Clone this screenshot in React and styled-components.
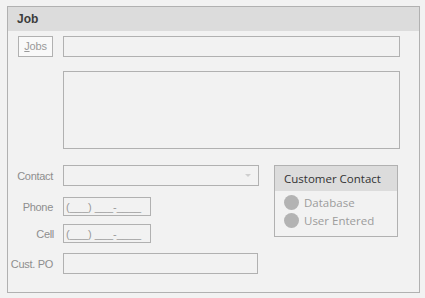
import styled, { createGlobalStyle } from "styled-components";

const GlobalStyle = createGlobalStyle`
  html, body {
    margin: 0;
    background: #f2f2f2;
  }
  body {
    font-family: "Liberation Sans", Arial, sans-serif;
  }
`;

const Frame = styled.section`
  box-sizing: border-box;
  width: 413px;
  height: 287px;
  margin: 6px 0 0 7px;
  border: 1px solid #b1b1b1;
  background: #f2f2f2;
`;

const Header = styled.div`
  height: 24px;
  background: #dcdcdc;
  display: flex;
  align-items: center;
  padding-left: 9px;
  font-size: 12px;
  font-weight: bold;
  color: #3c3c3c;
`;

const Body = styled.div`
  padding: 0 19px 0 4px;
`;

const Row = styled.div`
  display: grid;
  grid-template-columns: 42px ${(p) => p.$width || "1fr"};
  column-gap: 9px;
  align-items: center;
  height: ${(p) => p.$height}px;
  margin-top: ${(p) => p.$top || 0}px;
`;

const Label = styled.span`
  display: flex;
  justify-content: flex-end;
  white-space: nowrap;
  font-size: 11px;
  letter-spacing: -0.3px;
  color: #8e8e8e;
  padding-right: ${(p) => p.$pad || 0}px;
`;

const JobsButton = styled.button`
  justify-self: end;
  box-sizing: border-box;
  width: 35px;
  height: 21px;
  padding: 0;
  margin-right: 1px;
  border: 1px solid #b1b1b1;
  background: #f9f9f9;
  font-family: "Liberation Sans", Arial, sans-serif;
  font-size: 11px;
  letter-spacing: -0.2px;
  color: #9a9a9a;

  u {
    text-decoration-thickness: 1px;
  }
`;

const Field = styled.div`
  box-sizing: border-box;
  height: ${(p) => p.$height || 21}px;
  border: 1px solid #b1b1b1;
  background: #f2f2f2;
  position: relative;
  display: flex;
  align-items: center;
  padding-left: 2px;
  font-size: 11px;
  color: #9a9a9a;
  white-space: pre;
`;

const SelectArrow = styled.span`
  position: absolute;
  right: 7px;
  top: 8px;
  width: 0;
  height: 0;
  border-left: 3px solid transparent;
  border-right: 3px solid transparent;
  border-top: 3px solid #cfcfcf;
`;

const Lower = styled.div`
  display: flex;
  align-items: flex-start;
  margin-top: 16px;
`;

const LeftColumn = styled.div`
  width: 247px;
`;

const GroupBox = styled.div`
  box-sizing: border-box;
  width: 124px;
  height: 72px;
  margin-left: 15px;
  border: 1px solid #b1b1b1;
`;

const GroupTitle = styled.div`
  height: 25px;
  background: #dcdcdc;
  display: flex;
  align-items: center;
  padding-left: 9px;
  font-family: "Open Sans", "Noto Sans", sans-serif;
  font-size: 11.5px;
  color: #333;
`;

const RadioList = styled.div`
  display: flex;
  flex-direction: column;
  gap: 3px;
  padding: 4px 0 0 9px;
`;

const Radio = styled.div`
  display: flex;
  align-items: center;
  gap: 5px;
  height: 15px;
  font-family: "Open Sans", "Noto Sans", sans-serif;
  font-size: 11.5px;
  color: #9c9c9c;
`;

const Dot = styled.span`
  width: 15px;
  height: 15px;
  border-radius: 50%;
  background: #b3b3b3;
`;

export default function App() {
  return (
    <>
      <GlobalStyle />
      <Frame>
        <Header>Job</Header>
        <Body>
          <Row $height={22} $top={4}>
            <JobsButton>
              <u>J</u>obs
            </JobsButton>
            <Field $height={21} />
          </Row>
          <Row $height={78} $top={14}>
            <span />
            <Field $height={78} />
          </Row>
          <Lower>
            <LeftColumn>
              <Row $height={21}>
                <Label $pad={1}>Contact</Label>
                <Field $height={21}>
                  <SelectArrow />
                </Field>
              </Row>
              <Row $height={19} $top={11} $width="88px">
                <Label $pad={1}>Phone</Label>
                <Field $height={19}>(___) ___-____</Field>
              </Row>
              <Row $height={19} $top={8} $width="88px">
                <Label>Cell</Label>
                <Field $height={19}>(___) ___-____</Field>
              </Row>
              <Row $height={21} $top={10} $width="195px">
                <Label $pad={1}>Cust. PO</Label>
                <Field $height={21} />
              </Row>
            </LeftColumn>
            <GroupBox>
              <GroupTitle>Customer Contact</GroupTitle>
              <RadioList>
                <Radio>
                  <Dot />
                  Database
                </Radio>
                <Radio>
                  <Dot />
                  User Entered
                </Radio>
              </RadioList>
            </GroupBox>
          </Lower>
        </Body>
      </Frame>
    </>
  );
}
